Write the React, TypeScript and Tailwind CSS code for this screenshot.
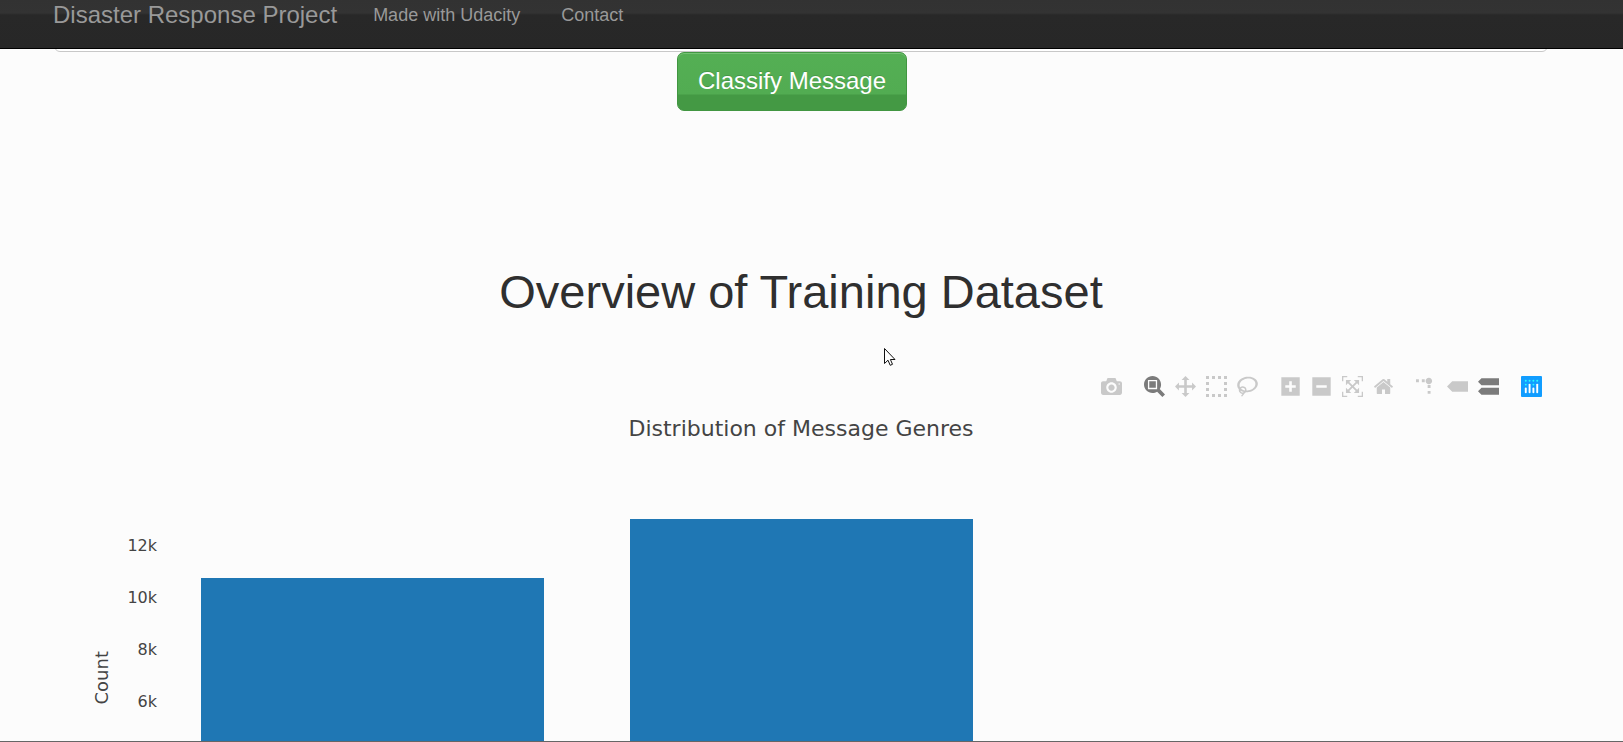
type IconDef = { label: string; path: string; width?: number; transform?: string; active?: boolean };

const groups: IconDef[][] = [
  [
    {
      label: 'Download plot as a png',
      path: 'm500 450c-83 0-150-67-150-150 0-83 67-150 150-150 83 0 150 67 150 150 0 83-67 150-150 150z m400 150h-120c-16 0-34 13-39 29l-31 93c-6 15-23 28-40 28h-340c-16 0-34-13-39-28l-31-94c-6-15-23-28-40-28h-120c-55 0-100-45-100-100v-450c0-55 45-100 100-100h800c55 0 100 45 100 100v450c0 55-45 100-100 100z m-400-550c-138 0-250 112-250 250 0 138 112 250 250 250 138 0 250-112 250-250 0-138-112-250-250-250z m365 380c-19 0-35 16-35 35 0 19 16 35 35 35 19 0 35-16 35-35 0-19-16-35-35-35z',
    },
  ],
  [
    {
      label: 'Zoom',
      active: true,
      path: 'm1000-25l-250 251c40 63 63 138 63 218 0 224-182 406-407 406-224 0-406-182-406-406s183-406 407-406c80 0 155 22 218 62l250-250 125 125z m-812 250l0 438 437 0 0-438-437 0z m62 375l313 0 0-312-313 0 0 312z',
    },
    {
      label: 'Pan',
      path: 'm1000 350l-187 188 0-125-250 0 0 250 125 0-188 187-187-187 125 0 0-250-250 0 0 125-188-188 186-187 0 125 252 0 0-250-125 0 187-188 188 188-125 0 0 250 250 0 0-126 187 188z',
    },
    {
      label: 'Box Select',
      path: 'm0 850l0-143 143 0 0 143-143 0z m286 0l0-143 143 0 0 143-143 0z m285 0l0-143 143 0 0 143-143 0z m286 0l0-143 143 0 0 143-143 0z m-857-286l0-143 143 0 0 143-143 0z m857 0l0-143 143 0 0 143-143 0z m-857-285l0-143 143 0 0 143-143 0z m857 0l0-143 143 0 0 143-143 0z m-857-286l0-143 143 0 0 143-143 0z m286 0l0-143 143 0 0 143-143 0z m285 0l0-143 143 0 0 143-143 0z m286 0l0-143 143 0 0 143-143 0z',
    },
    {
      label: 'Lasso Select',
      width: 1031,
      path: 'm1018 538c-36 207-290 336-568 286-277-48-473-256-436-463 10-57 36-108 76-151-13-66 11-137 68-183 34-28 75-41 114-42l-55-70 0 0c-2-1-3-2-4-3-10-14-8-34 5-45 14-11 34-8 45 4 1 1 2 3 2 5l0 0 113 140c16 11 31 24 45 40 4 3 6 7 8 11 48-3 100 0 151 9 278 48 473 255 436 462z m-624-379c-80 14-149 48-197 96 42 42 109 47 156 9 33-26 47-66 41-105z m-187-74c-19 16-33 37-39 60 50-32 109-55 174-68-42-25-95-24-135 8z m360 75c-34-7-69-9-102-8 8 62-16 128-68 170-73 59-175 54-244-5-9 20-16 40-20 61-28 159 121 317 333 354s407-60 434-217c28-159-121-318-333-355z',
    },
  ],
  [
    {
      label: 'Zoom in',
      width: 875,
      path: 'm1 787l0-875 875 0 0 875-875 0z m687-500l-187 0 0-187-125 0 0 187-188 0 0 125 188 0 0 187 125 0 0-187 187 0 0-125z',
    },
    {
      label: 'Zoom out',
      width: 875,
      path: 'm0 788l0-876 875 0 0 876-875 0z m688-500l-500 0 0 125 500 0 0-125z',
    },
    {
      label: 'Autoscale',
      path: 'm250 850l-187 0-63 0 0-62 0-188 63 0 0 188 187 0 0 62z m688 0l-188 0 0-62 188 0 0-188 62 0 0 188 0 62-62 0z m-875-938l0 188-63 0 0-188 0-62 63 0 187 0 0 62-187 0z m875 188l0-188-188 0 0-62 188 0 62 0 0 62 0 188-62 0z m-125 188l-1 0-93-94-156 156 156 156 92-93 2 0 0 250-250 0 0-2 93-92-156-156-156 156 94 92 0 2-250 0 0-250 0 0 93 93 157-156-157-156-93 94 0 0 0-250 250 0 0 0-94 93 156 157 156-157-93-93 0 0 250 0 0 250z',
    },
    {
      label: 'Reset axes',
      width: 929,
      path: 'm786 296v-267q0-15-11-26t-25-10h-214v214h-143v-214h-214q-15 0-25 10t-11 26v267q0 1 0 2t0 2l321 264 321-264q1-1 1-4z m124 39l-34-41q-5-5-12-6h-2q-7 0-12 3l-386 322-386-322q-7-4-13-4-7 2-12 7l-35 41q-4 5-3 13t6 12l401 334q18 15 42 15t43-15l136-114v109q0 8 5 13t13 5h107q8 0 13-5t5-13v-227l122-102q5-5 6-12t-4-13z',
    },
  ],
  [
    {
      label: 'Toggle Spike Lines',
      transform: 'matrix(1.5 0 0 -1.5 0 850)',
      path: 'M512 409c0-57-46-104-103-104-57 0-104 47-104 104 0 57 47 103 104 103 57 0 103-46 103-103z m-327-39l92 0 0 92-92 0z m-185 0l92 0 0 92-92 0z m370-186l92 0 0 93-92 0z m0-184l92 0 0 92-92 0z',
    },
    {
      label: 'Show closest data on hover',
      width: 1500,
      path: 'm375 725l0 0-375-375 375-374 0-1 1125 0 0 750-1125 0z',
    },
    {
      label: 'Compare data on hover',
      width: 1125,
      active: true,
      path: 'm187 786l0 2-187-188 188-187 0 0 937 0 0 373-938 0z m0-499l0 1-187-188 188-188 0 0 937 0 0 376-938-1z',
    },
  ],
];

const ticks = ['12k', '10k', '8k', '6k'];

function ModeButton({ icon }: { icon: IconDef }) {
  return (
    <button type="button" aria-label={icon.label} className={icon.active ? 'text-[#7b7b7b]' : 'text-[#c9c9c9]'}>
      <svg className="block size-[21px]" viewBox={`0 0 ${icon.width ?? 1000} 1000`} fill="currentColor">
        <path transform={icon.transform ?? 'matrix(1 0 0 -1 0 850)'} d={icon.path} />
      </svg>
    </button>
  );
}

function PlotlyLogo() {
  return (
    <a href="#plotly" aria-label="Produced with Plotly">
      <svg className="block size-[21px]" viewBox="0 0 132 132">
        <rect width="132" height="132" rx="6" fill="#119dff" />
        <g fill="#25fefd">
          <circle cx="30" cy="30" r="6" />
          <circle cx="54" cy="30" r="6" />
          <circle cx="78" cy="30" r="6" />
          <circle cx="102" cy="30" r="6" />
          <circle cx="30" cy="54" r="6" />
          <circle cx="78" cy="54" r="6" />
        </g>
        <g fill="#fff">
          <path d="M30,72a6,6,0,0,0-6,6v24a6,6,0,0,0,12,0V78A6,6,0,0,0,30,72Z" />
          <path d="M78,72a6,6,0,0,0-6,6v24a6,6,0,0,0,12,0V78A6,6,0,0,0,78,72Z" />
          <path d="M54,48a6,6,0,0,0-6,6v48a6,6,0,0,0,12,0V54A6,6,0,0,0,54,48Z" />
          <path d="M102,48a6,6,0,0,0-6,6v48a6,6,0,0,0,12,0V54A6,6,0,0,0,102,48Z" />
        </g>
      </svg>
    </a>
  );
}

export default function App() {
  return (
    <div className="relative flex h-screen flex-col overflow-hidden border-b border-[#666] bg-[#fcfcfc] font-['Liberation_Sans',Arial,sans-serif] text-[#2f2f2f]">
      <nav className="flex h-[49px] shrink-0 items-start border-b border-black bg-[linear-gradient(#323232_0,#333_13px,#282828_15px,#272727_100%)] pl-[53px] leading-[30px] text-[#999]">
        <a href="#home" className="mr-[36px] text-[24px]">Disaster Response Project</a>
        <a href="#udacity" className="mr-[41px] text-[18px]">Made with Udacity</a>
        <a href="#contact" className="text-[18px]">Contact</a>
      </nav>

      <main className="flex min-h-0 flex-1 flex-col pr-[75px] pl-[54px]">
        <form className="flex shrink-0 flex-col items-center" onSubmit={(e) => e.preventDefault()}>
          <div className="flex h-[3px] w-full items-end overflow-hidden">
            <input
              type="text"
              aria-label="Enter a message to classify"
              className="h-[46px] w-full shrink-0 rounded-[6px] border border-[#c8c8c8] bg-white"
            />
          </div>
          <button
            type="submit"
            className="mr-[18px] h-[59px] rounded-[7px] border border-[#419641] bg-[linear-gradient(#54af54_0,#52ac52_41px,#449944_42px,#449944_100%)] px-[20px] pb-[2px] text-[24px] text-white shadow-[inset_0_1px_0_#74c274] [text-shadow:0_-1px_0_rgba(0,0,0,0.15)]"
          >
            Classify Message
          </button>
        </form>

        <h1 className="mt-[153px] shrink-0 text-center text-[47px] leading-[56px]">Overview of Training Dataset</h1>

        <section className="mt-[56px] flex min-h-0 flex-1 flex-col font-['DejaVu_Sans',Verdana,sans-serif] text-[#444]">
          <div className="flex shrink-0 justify-end gap-[22px] pr-[6px]">
            {groups.map((group, i) => (
              <div key={i} className="flex gap-[10px]">
                {group.map((icon) => (
                  <ModeButton key={icon.label} icon={icon} />
                ))}
              </div>
            ))}
            <PlotlyLogo />
          </div>

          <h2 className="mt-[18px] shrink-0 text-center text-[22px] leading-[28px]">Distribution of Message Genres</h2>

          <div className="mt-[76px] flex min-h-0 flex-1">
            <div className="flex w-[104px] shrink-0 justify-between pr-px pl-[38px]">
              <div className="mt-[132px] flex h-[53px] items-center text-[18px] leading-[20px] [writing-mode:vertical-rl]">
                <span className="rotate-180">Count</span>
              </div>
              <div className="flex flex-col text-right text-[16px]">
                {ticks.map((tick) => (
                  <span key={tick} className="h-[52px] shrink-0 leading-[54px]">
                    {tick}
                  </span>
                ))}
              </div>
            </div>
            <div className="mr-[103px] grid flex-1 grid-cols-3">
              <div className="flex px-[10%] pt-[59px]">
                <div className="flex-1 bg-[#1f77b4]" />
              </div>
              <div className="flex px-[10%]">
                <div className="flex-1 bg-[#1f77b4]" />
              </div>
            </div>
          </div>
        </section>
      </main>

      <svg className="pointer-events-none absolute top-[347px] left-[883px] h-[20px] w-[13px]" viewBox="0 0 13 20">
        <path d="M1.5 1.5V16.5L5 13.2L7.2 18.3L9.5 17.3L7.4 12.5H12Z" fill="#fff" stroke="#111" strokeWidth="1" />
      </svg>
    </div>
  );
}
